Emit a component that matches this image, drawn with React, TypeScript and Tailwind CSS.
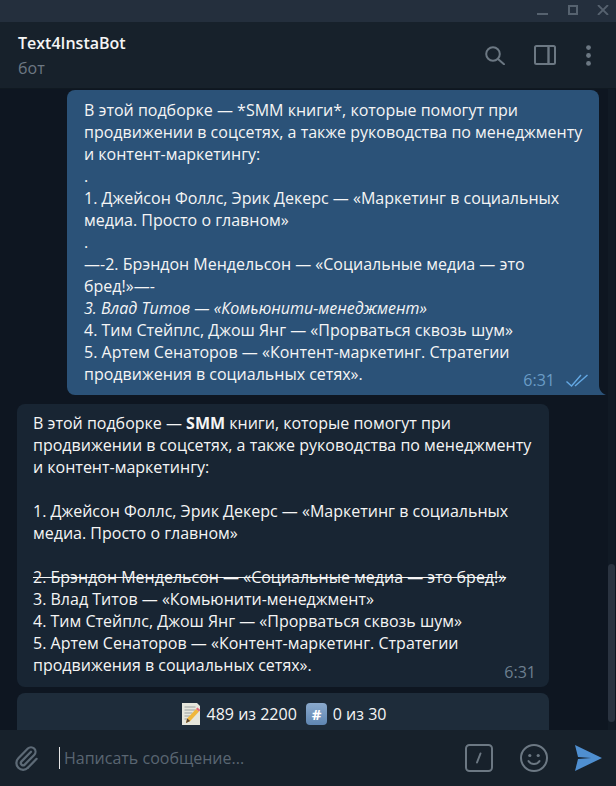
export default function App() {
  const font = { fontFamily: '"Open Sans", "Noto Sans", sans-serif' };
  return (
    <div style={font} className="w-[616px] h-[786px] flex flex-col overflow-hidden bg-[#0e1621] text-[16px] leading-[22px] text-[#f5f5f5]">
      <div className="h-[22px] shrink-0 bg-[#242f3d] flex items-start pt-[5px] pl-[537px]">
        <svg width="11" height="10" viewBox="0 0 11 10" className="mr-[20px]"><path d="M0 9h11" stroke="#56626f" strokeWidth="2" /></svg>
        <svg width="10" height="10" viewBox="0 0 10 10" className="mr-[19px]"><rect x="1" y="1" width="8" height="8" fill="none" stroke="#56626f" strokeWidth="2" /></svg>
        <svg width="12" height="10" viewBox="0 0 12 10"><path d="M1 0l10 10M11 0L1 10" stroke="#56626f" strokeWidth="1.8" /></svg>
      </div>
      <div className="h-[67px] shrink-0 bg-[#17212b] flex items-center pl-[18px] border-b border-[#101921]">
        <div className="flex-1">
          <div className="font-semibold text-[#f5f5f5] leading-[22px]">Text4InstaBot</div>
          <div className="text-[#6d7883] leading-[22px] mt-[3px]">бот</div>
        </div>
        <svg width="20" height="19" viewBox="0 0 20 19" fill="none" stroke="#6c7883" strokeWidth="2" className="mr-[29px]">
          <circle cx="8" cy="8" r="6.8" /><path d="M13 13l6 5.2" strokeLinecap="round" />
        </svg>
        <svg width="22" height="20" viewBox="0 0 22 20" fill="none" stroke="#6c7883" strokeWidth="2" className="mr-[30px]">
          <rect x="1" y="1" width="20" height="18" rx="1.5" /><path d="M14.5 1v18" strokeWidth="2.4" />
        </svg>
        <svg width="5" height="21" viewBox="0 0 5 21" fill="#6c7883" className="mr-[25px]"><circle cx="2.5" cy="2.6" r="2.4" /><circle cx="2.5" cy="10.5" r="2.4" /><circle cx="2.5" cy="18.4" r="2.4" /></svg>
      </div>
      <div className="flex-1 min-h-0 relative overflow-hidden">
        <div className="absolute right-[1px] top-0 bottom-0 w-[7px] bg-[#111a25]" />
        <div className="absolute right-[1px] top-[475px] h-[158px] w-[7px] rounded-full bg-[#2a3340]" />
        <div className="flex flex-col items-start pl-[17px] pt-[1px]">
          <div className="relative ml-[50px] w-[532px] h-[305px] bg-[#2b5278] rounded-[8px] rounded-br-none pl-[17px] pt-[9px] whitespace-nowrap">
            <svg width="7" height="10" viewBox="0 0 7 10" className="absolute left-full bottom-0" fill="#2b5278">
              <path d="M0 0C0 5 3 8.5 7 10H0z" />
            </svg>
            <p>В этой подборке — *SMM книги*, которые помогут при</p>
            <p>продвижении в соцсетях, а также руководства по менеджменту</p>
            <p>и контент-маркетингу:</p>
            <p>.</p>
            <p>1. Джейсон Фоллс, Эрик Декерс — «Маркетинг в социальных</p>
            <p>медиа. Просто о главном»</p>
            <p>.</p>
            <p>—-2. Брэндон Мендельсон — «Социальные медиа — это</p>
            <p>бред!»—-</p>
            <p className="italic">3. Влад Титов — «Комьюнити-менеджмент»</p>
            <p>4. Тим Стейплс, Джош Янг — «Прорваться сквозь шум»</p>
            <p>5. Артем Сенаторов — «Контент-маркетинг. Стратегии</p>
            <p>продвижения в социальных сетях».</p>
            <div className="absolute right-[11px] bottom-[4px] flex items-center gap-[11px]">
              <span className="text-[#6a9cc6] leading-[22px]">6:31</span>
              <svg width="22" height="13" viewBox="0 0 22 13" fill="none" stroke="#64a9e4" strokeWidth="1.4">
                <path d="M0.5 7.5l5 4.5L15 1" /><path d="M9 12L21.5 1" />
              </svg>
            </div>
          </div>
          <div className="relative mt-[9px] w-[532px] h-[283px] bg-[#182533] rounded-[8px] pl-[16px] pt-[8px] whitespace-nowrap">
            <p>В этой подборке — <b className="font-bold">SMM</b> книги, которые помогут при</p>
            <p>продвижении в соцсетях, а также руководства по менеджменту</p>
            <p>и контент-маркетингу:</p>
            <p>&nbsp;</p>
            <p>1. Джейсон Фоллс, Эрик Декерс — «Маркетинг в социальных</p>
            <p>медиа. Просто о главном»</p>
            <p>&nbsp;</p>
            <p className="line-through">2. Брэндон Мендельсон — «Социальные медиа — это бред!»</p>
            <p>3. Влад Титов — «Комьюнити-менеджмент»</p>
            <p>4. Тим Стейплс, Джош Янг — «Прорваться сквозь шум»</p>
            <p>5. Артем Сенаторов — «Контент-маркетинг. Стратегии</p>
            <p>продвижения в социальных сетях».</p>
            <span className="absolute right-[13px] bottom-[4px] text-[#6d7f8f]">6:31</span>
          </div>
          <div className="mt-[6px] w-[532px] h-[60px] bg-[#1e2c3a] rounded-[8px] pt-[10px] pl-[1px] flex justify-center items-start text-[#f5f5f5]">
            <span className="flex items-center h-[22px]">
              <svg width="20" height="22" viewBox="0 0 20 22" className="mr-[6px]">
                <path d="M1 0h15l3 3v19H1z" fill="#e6e6dc" />
                <path d="M3.5 4h11M3.5 7h11M3.5 10h8M3.5 13h6M3.5 16h5" stroke="#9aa0a0" strokeWidth="1" />
                <path d="M5 20l1.2-4.5L15 6l3 2.6-8.8 9.4z" fill="#f0b73c" />
                <path d="M15 6l1.4-1.6 3 2.6-1.4 1.6z" fill="#e2687a" />
                <path d="M5 20l1.2-4.5 3 2.5z" fill="#5b4632" />
              </svg>
              <span>489 из 2200</span>
              <svg width="21" height="22" viewBox="0 0 21 22" className="ml-[9px] mr-[6px]">
                <defs>
                  <linearGradient id="keycap" x1="0" y1="0" x2="0" y2="1">
                    <stop offset="0" stopColor="#8aa9cc" />
                    <stop offset="1" stopColor="#5f86b2" />
                  </linearGradient>
                </defs>
                <rect x="0" y="0" width="21" height="22" rx="4" fill="url(#keycap)" />
                <text x="10.5" y="16.5" textAnchor="middle" fontSize="15" fontWeight="700" fill="#fff" fontFamily='"Open Sans", sans-serif'>#</text>
              </svg>
              <span>0 из 30</span>
            </span>
          </div>
        </div>
      </div>
      <div className="h-[56px] shrink-0 bg-[#17212b] flex items-center relative z-10">
        <svg width="27" height="29" viewBox="0 0 24 24" fill="none" stroke="#5d6a76" strokeWidth="2" strokeLinecap="round" strokeLinejoin="round" className="ml-[13px] mr-[19px]">
          <path d="M13.234 20.252 21 12.3" />
          <path d="m16 6-8.414 8.586a2 2 0 0 0 0 2.828 2 2 0 0 0 2.828 0l8.414-8.586a4 4 0 0 0 0-5.656 4 4 0 0 0-5.656 0l-8.415 8.585a6 6 0 1 0 8.486 8.486" />
        </svg>
        <span className="w-[1px] h-[22px] bg-[#e6e6e6]" />
        <span className="flex-1 pl-[4px] text-[#5a6672]">Написать сообщение...</span>
        <svg width="28" height="28" viewBox="0 0 28 28" fill="none" stroke="#6c7883" strokeWidth="2" className="mr-[27px]">
          <rect x="1" y="1" width="26" height="26" rx="3.5" /><path d="M12 18.5L15.5 9.5" strokeLinecap="round" />
        </svg>
        <svg width="28" height="28" viewBox="0 0 28 28" fill="none" stroke="#6c7883" strokeWidth="2" className="mr-[27px]">
          <circle cx="14" cy="14" r="13" /><circle cx="9.8" cy="11.5" r="1.6" fill="#6c7883" stroke="none" /><circle cx="18.2" cy="11.5" r="1.6" fill="#6c7883" stroke="none" /><path d="M8.5 17c2.5 4 8.5 4 11 0" strokeLinecap="round" />
        </svg>
        <svg width="27" height="26" viewBox="0 0 27 26" fill="#4f8fd0" className="mr-[14px]">
          <path d="M0 0l27 13L0 26l3-12 13-1L3 12z" />
        </svg>
      </div>
    </div>
  );
}
